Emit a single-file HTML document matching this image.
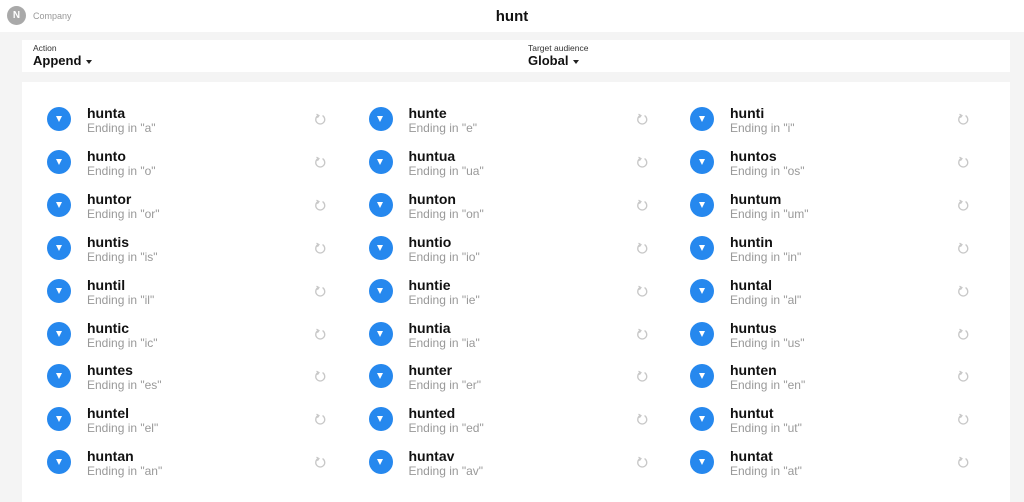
<!DOCTYPE html>
<html><head><style>
*{margin:0;padding:0;box-sizing:border-box}
body{width:1024px;height:489px;overflow:hidden;background:#f4f4f4;font-family:"Liberation Sans",Arial,sans-serif;position:relative}
.hdr{position:absolute;left:0;top:0;width:1024px;height:32px;background:#fff}
.logo{position:absolute;left:7px;top:6px;width:19px;height:19px;border-radius:50%;background:#a9a9a9;color:#fff;font-size:10px;font-weight:bold;text-align:center;line-height:19px}
.co{position:absolute;left:33px;top:11px;font-size:9px;color:#999}
.title{position:absolute;left:0;width:1024px;top:8px;text-align:center;font-size:15px;font-weight:bold;color:#111}
.card{position:absolute;left:22px;width:988px;background:#fff}
.lbl{position:absolute;font-size:8.5px;color:#333}
.val{position:absolute;font-size:13px;font-weight:bold;color:#111}
.car{display:inline-block;width:0;height:0;border-left:3.5px solid transparent;border-right:3.5px solid transparent;border-top:4px solid #222;vertical-align:middle;margin-left:5px}
.it{position:absolute;width:300px;height:40px}
.c{position:absolute;left:0;top:0;width:24px;height:24px;border-radius:50%;background:#2688ee}
.c:after{content:"";position:absolute;left:8.5px;top:9px;border-left:3.5px solid transparent;border-right:3.5px solid transparent;border-top:6px solid #fff}
.n{position:absolute;left:40px;top:-2px;font-size:14px;font-weight:bold;color:#111}
.s{position:absolute;left:40px;top:14px;font-size:12px;color:#999}
.r{position:absolute;left:267px;top:6px}
</style></head><body>
<div class="hdr"><div class="logo">N</div><div class="co">Company</div><div class="title">hunt</div></div>
<div class="card" style="top:40px;height:32px">
<div class="lbl" style="left:11px;top:3px">Action</div>
<div class="val" style="left:11px;top:13px">Append<span class="car"></span></div>
<div class="lbl" style="left:506px;top:3px">Target audience</div>
<div class="val" style="left:506px;top:13px">Global<span class="car"></span></div>
</div>
<div class="card" style="top:82px;height:420px"></div>
<div id="g"></div>
<script>
var d=[["hunta","a"],["hunte","e"],["hunti","i"],["hunto","o"],["huntua","ua"],["huntos","os"],["huntor","or"],["hunton","on"],["huntum","um"],["huntis","is"],["huntio","io"],["huntin","in"],["huntil","il"],["huntie","ie"],["huntal","al"],["huntic","ic"],["huntia","ia"],["huntus","us"],["huntes","es"],["hunter","er"],["hunten","en"],["huntel","el"],["hunted","ed"],["huntut","ut"],["huntan","an"],["huntav","av"],["huntat","at"]];
var h="";d.forEach(function(x,i){var col=i%3,row=Math.floor(i/3);var l=47+col*321.5,t=107+row*42.9;
h+='<div class="it" style="left:'+l+'px;top:'+t+'px"><div class="c"></div><div class="n">'+x[0]+'</div><div class="s">Ending in "'+x[1]+'"</div><svg class="r" width="13" height="13" viewBox="0 0 13 13"><path d="M8.5 2.6A4.5 4.5 0 1 1 4 2.6" fill="none" stroke="#c8c8c8" stroke-width="1.3"/><path d="M2.5 1.2L5 2.6 3.4 4.8" fill="none" stroke="#c8c8c8" stroke-width="1.2"/></svg></div>';});
document.getElementById("g").innerHTML=h;
</script>
</body></html>
